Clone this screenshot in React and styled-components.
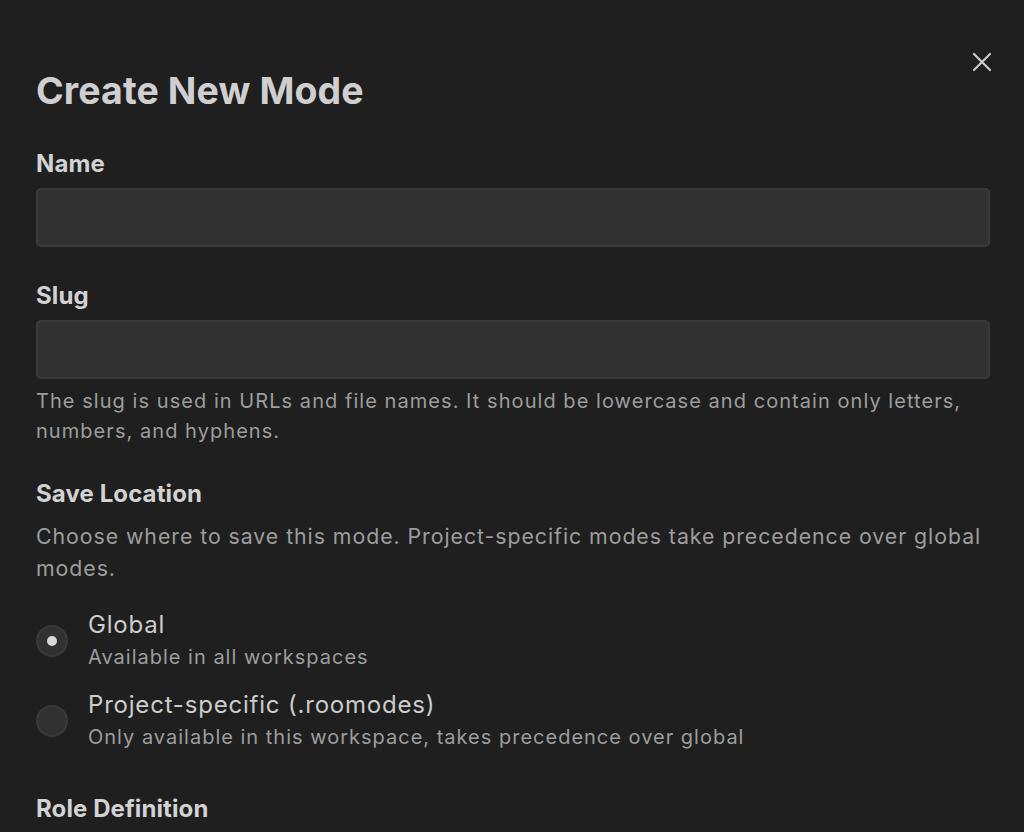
import React, { useState } from "react";
import styled, { createGlobalStyle } from "styled-components";

const GlobalStyle = createGlobalStyle`
  html, body {
    margin: 0;
    padding: 0;
    background: #1f1f1f;
  }
  body {
    font-family: Inter, "Noto Sans", sans-serif;
    color: #cccccc;
  }
`;

const Dialog = styled.div`
  position: relative;
  box-sizing: border-box;
  width: 1024px;
  height: 832px;
  overflow: hidden;
  padding: 66px 34px 0 36px;
  background: #1f1f1f;
`;

const CloseButton = styled.button`
  position: absolute;
  top: 50px;
  right: 30px;
  width: 24px;
  height: 24px;
  padding: 0;
  border: none;
  background: transparent;
  color: #cccccc;
  cursor: pointer;
  display: flex;
  align-items: center;
  justify-content: center;
`;

const Title = styled.h2`
  margin: 0 0 32px;
  font-size: 37.5px;
  line-height: 50px;
  font-weight: 700;
  letter-spacing: 0.1px;
  color: #cfcfcf;
`;

const Field = styled.div`
  display: flex;
  flex-direction: column;
  margin-bottom: ${(p) => p.gap || 0}px;
`;

const Label = styled.div`
  font-size: 24px;
  line-height: 32px;
  font-weight: 700;
  letter-spacing: 0.1px;
  color: #d2d2d2;
  margin-top: ${(p) => p.top || 0}px;
  margin-bottom: 8px;
`;

const Input = styled.input`
  box-sizing: border-box;
  width: 100%;
  height: 59px;
  padding: 0 14px;
  border: 2px solid #3a3a3a;
  border-radius: 5px;
  background: #313131;
  color: #cccccc;
  font-family: inherit;
  font-size: 20px;
  outline: none;
`;

const Help = styled.p`
  margin: 7px 0 0;
  font-size: 20px;
  line-height: 30px;
  color: #9d9d9d;
  letter-spacing: 1.05px;
`;

const Description = styled.p`
  margin: 2px -24px 0 0;
  font-size: 21.3px;
  line-height: 32px;
  color: #9d9d9d;
  letter-spacing: 0.95px;
`;

const RadioList = styled.div`
  display: flex;
  flex-direction: column;
  gap: 16px;
  margin-top: 25px;
`;

const RadioRow = styled.label`
  display: flex;
  align-items: center;
  gap: 20px;
  cursor: pointer;
`;

const Circle = styled.span`
  box-sizing: border-box;
  width: 32px;
  height: 32px;
  border-radius: 50%;
  background: #313131;
  border: 2px solid #3a3a3a;
  display: flex;
  align-items: center;
  justify-content: center;
  flex-shrink: 0;

  &::after {
    content: "";
    width: 10px;
    height: 10px;
    border-radius: 50%;
    background: ${(p) => (p.checked ? "#d8d8d8" : "transparent")};
  }
`;

const OptionText = styled.div`
  display: flex;
  flex-direction: column;
`;

const OptionTitle = styled.span`
  font-size: 24px;
  line-height: 32px;
  color: #cccccc;
  letter-spacing: 0.8px;
`;

const OptionSub = styled.span`
  font-size: 20px;
  line-height: 32px;
  color: #9d9d9d;
  letter-spacing: 1px;
`;

const CloseIcon = () => (
  <svg width="20" height="20" viewBox="0 0 20 20" fill="none">
    <path
      d="M2 2L18 18M18 2L2 18"
      stroke="currentColor"
      strokeWidth="2.2"
      strokeLinecap="round"
    />
  </svg>
);

const locations = [
  { id: "global", title: "Global", sub: "Available in all workspaces" },
  {
    id: "project",
    title: "Project-specific (.roomodes)",
    sub: "Only available in this workspace, takes precedence over global",
  },
];

const App = () => {
  const [location, setLocation] = useState("global");

  return (
    <>
      <GlobalStyle />
      <Dialog>
        <CloseButton aria-label="Close">
          <CloseIcon />
        </CloseButton>
        <Title>Create New Mode</Title>

        <Field gap={33}>
          <Label>Name</Label>
          <Input />
        </Field>

        <Field gap={32}>
          <Label>Slug</Label>
          <Input />
          <Help>
            The slug is used in URLs and file names. It should be lowercase and
            contain only letters, numbers, and hyphens.
          </Help>
        </Field>

        <Field>
          <Label>Save Location</Label>
          <Description>
            Choose where to save this mode. Project-specific modes take
            precedence over global modes.
          </Description>
          <RadioList>
            {locations.map((l) => (
              <RadioRow key={l.id} onClick={() => setLocation(l.id)}>
                <Circle checked={location === l.id} />
                <OptionText>
                  <OptionTitle>{l.title}</OptionTitle>
                  <OptionSub>{l.sub}</OptionSub>
                </OptionText>
              </RadioRow>
            ))}
          </RadioList>
        </Field>

        <Field>
          <Label top={40}>Role Definition</Label>
        </Field>
      </Dialog>
    </>
  );
};

export default App;
